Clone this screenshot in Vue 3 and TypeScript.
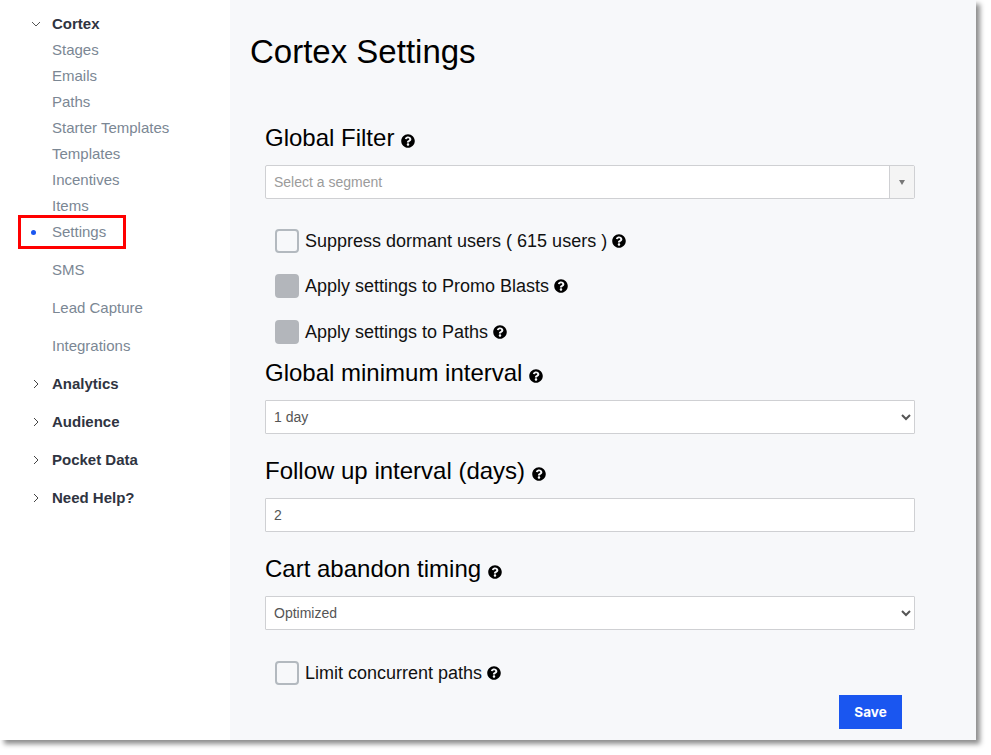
<script setup lang="ts">
const subItems = ['Stages', 'Emails', 'Paths', 'Starter Templates', 'Templates', 'Incentives', 'Items']
const plainItems = ['SMS', 'Lead Capture', 'Integrations']
const groups = ['Analytics', 'Audience', 'Pocket Data', 'Need Help?']
const helpPath = 'M504 256c0 137-111 248-248 248S8 393 8 256 119 8 256 8s248 111 248 248zM262.700 90c-54.500 0-89.300 23-116.500 63.800-3.500 5.300-2.400 12.400 2.700 16.300l34.700 26.300c5.200 3.900 12.600 3 16.700-2.100 17.900-22.700 30.100-35.800 57.300-35.800 20.400 0 45.700 13.100 45.700 32.900 0 14.900-12.300 22.600-32.400 33.900C247.100 238.500 216 254.900 216 296v4c0 6.600 5.400 12 12 12h56c6.600 0 12-5.400 12-12v-1.300c0-28.500 83.200-29.700 83.200-106.700 0-58-60.200-102-116.500-102zM256 338c-25.400 0-46 20.600-46 46s20.600 46 46 46 46-20.600 46-46-20.600-46-46-46z'
</script>

<template>
  <div class="page">
    <div class="window">
      <aside class="sidebar">
        <div class="row head">
          <svg class="chev" width="10" height="10" viewBox="0 0 10 10"><path d="M1 3l4 4 4-4" fill="none" stroke="#555" stroke-width="1" /></svg>
          <span>Cortex</span>
        </div>
        <div v-for="s in subItems" :key="s" class="row sub">{{ s }}</div>
        <div class="row sub active"><i class="dot"></i>Settings</div>
        <div class="plain-list">
          <div v-for="p in plainItems" :key="p" class="row top sub">{{ p }}</div>
          <div v-for="g in groups" :key="g" class="row top head">
            <svg class="chev" width="10" height="10" viewBox="0 0 10 10"><path d="M3 1l4 4-4 4" fill="none" stroke="#444" stroke-width="1" /></svg>
            <span>{{ g }}</span>
          </div>
        </div>
      </aside>

      <main class="main">
        <h1 class="title">Cortex Settings</h1>
        <form class="form" @submit.prevent>
          <h2 class="label first">Global Filter <svg class="help" viewBox="0 0 512 512"><path :d="helpPath" /></svg></h2>
          <div class="combo">
            <span class="combo-text">Select a segment</span>
            <span class="combo-btn"><i class="tri"></i></span>
          </div>
          <div class="check check-1"><span class="box"></span>Suppress dormant users ( 615 users ) <svg class="help" viewBox="0 0 512 512"><path :d="helpPath" /></svg></div>
          <div class="check check-2"><span class="box off"></span>Apply settings to Promo Blasts <svg class="help" viewBox="0 0 512 512"><path :d="helpPath" /></svg></div>
          <div class="check"><span class="box off"></span>Apply settings to Paths <svg class="help" viewBox="0 0 512 512"><path :d="helpPath" /></svg></div>

          <h2 class="label l2">Global minimum interval <svg class="help" viewBox="0 0 512 512"><path :d="helpPath" /></svg></h2>
          <select class="field sel"><option>1 day</option></select>

          <h2 class="label">Follow up interval (days) <svg class="help" viewBox="0 0 512 512"><path :d="helpPath" /></svg></h2>
          <input class="field" value="2" />

          <h2 class="label">Cart abandon timing <svg class="help" viewBox="0 0 512 512"><path :d="helpPath" /></svg></h2>
          <select class="field sel"><option>Optimized</option></select>

          <div class="check check-last"><span class="box"></span>Limit concurrent paths <svg class="help" viewBox="0 0 512 512"><path :d="helpPath" /></svg></div>
          <div class="actions"><button class="save" type="submit">Save</button></div>
        </form>
      </main>
    </div>
  </div>
</template>

<style>
html, body { margin: 0; background: #fff; }
</style>

<style scoped>
.page {
  width: 991px;
  height: 755px;
  overflow: hidden;
}
.window {
  width: 976px;
  height: 740px;
  display: flex;
  overflow: hidden;
  background: #fff;
  box-shadow: 4px 4px 5px rgba(0, 0, 0, 0.45);
  font-family: "Liberation Sans", Arial, sans-serif;
}
.sidebar {
  width: 230px;
  flex: none;
  padding-top: 11px;
  box-sizing: border-box;
  font-size: 15px;
}
.row {
  position: relative;
  height: 26px;
  line-height: 26px;
  padding-left: 52px;
  white-space: nowrap;
}
.sub { color: #7b8794; }
.head { color: #2f3441; font-weight: 700; }
.top { height: 38px; line-height: 38px; }
.chev { position: absolute; left: 31px; top: 50%; margin-top: -5px; }
.plain-list { margin-top: 6px; }
.active::after {
  content: "";
  position: absolute;
  left: 18px;
  top: -4px;
  width: 108px;
  height: 34px;
  box-sizing: border-box;
  border: 3px solid #f00;
}
.dot {
  position: absolute;
  left: 31px;
  top: 11px;
  width: 5px;
  height: 5px;
  border-radius: 50%;
  background: #1a56f0;
}
.main {
  flex: 1;
  background: #f7f8fa;
  padding: 0 61px 0 20px;
  min-width: 0;
}
.title {
  margin: 32px 0 0;
  font-size: 33px;
  font-weight: 400;
  line-height: 40px;
  color: #000;
}
.form { padding-left: 15px; }
.label {
  margin: 23px 0 13px;
  font-size: 24px;
  font-weight: 400;
  line-height: 28px;
  color: #000;
}
.label.first { margin-top: 52px; }
.label.l2 { margin-top: 15px; }
.help { width: 14px; height: 14px; fill: #000; vertical-align: -2px; }
.combo {
  display: flex;
  height: 34px;
  box-sizing: border-box;
  border: 1px solid #cfd0d3;
  border-radius: 2px;
  background: #fff;
}
.combo-text {
  flex: 1;
  padding-left: 8px;
  line-height: 33px;
  font-size: 14px;
  color: #9b9b9b;
}
.combo-btn {
  width: 25px;
  box-sizing: border-box;
  border-left: 1px solid #cfd0d3;
  background: #f4f4f4;
  display: flex;
  align-items: center;
  justify-content: center;
}
.tri {
  width: 0;
  height: 0;
  border-left: 3px solid transparent;
  border-right: 3px solid transparent;
  border-top: 5px solid #777;
}
.check {
  display: flex;
  align-items: center;
  height: 24px;
  margin: 22px 0 0 10px;
  font-size: 18px;
  color: #111;
  white-space: pre;
}
.check-1 { margin-top: 30px; }
.check-2 { margin-top: 21px; }
.check-last { margin-top: 31px; }
.box {
  width: 24px;
  height: 24px;
  box-sizing: border-box;
  border: 2px solid #b3b9bf;
  border-radius: 4px;
  background: transparent;
  margin-right: 6px;
  flex: none;
}
.box.off { background: #b3b6bb; border-color: #b3b6bb; }
.field {
  display: block;
  width: 100%;
  height: 34px;
  box-sizing: border-box;
  border: 1px solid #cfd0d3;
  border-radius: 1px;
  background: #fff;
  padding: 0 4px 0 8px;
  font: 14px "Liberation Sans", Arial, sans-serif;
  color: #555;
}
.sel { padding-left: 4px; }
.actions {
  display: flex;
  justify-content: flex-end;
  padding-right: 13px;
  margin-top: 10px;
}
.save {
  width: 63px;
  height: 34px;
  border: 0;
  padding: 0;
  background: #1a56f0;
  color: #fff;
  font: 700 13.5px Inter, "Liberation Sans", sans-serif;
}
</style>
